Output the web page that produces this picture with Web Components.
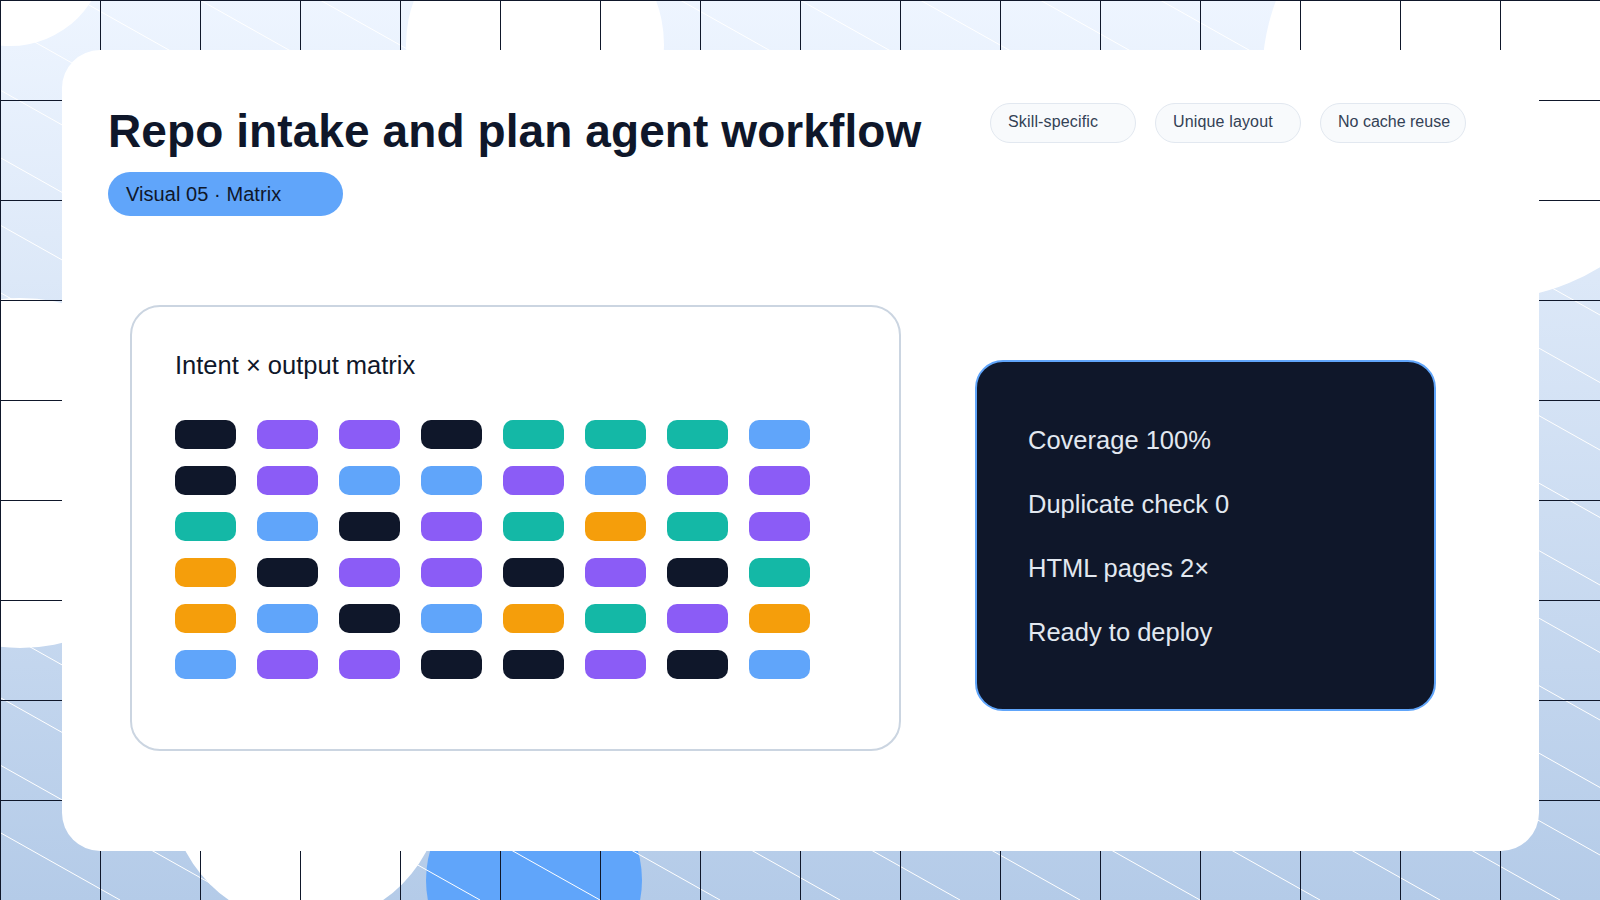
<!DOCTYPE html>
<html lang="en"><head><meta charset="utf-8"><title>Repo intake</title>
<style>html,body{margin:0;padding:0;background:#fff}body{font-family:"Liberation Sans",Arial,sans-serif;color:#0f172a}</style></head>
<body>
<x-stage>
  <x-card>
    <x-header slot="header">
      <span slot="title">Repo intake and plan agent workflow</span>
      <x-pill slot="badge">Visual 05 · Matrix</x-pill>
      <x-chip slot="chips" style="letter-spacing:.15px">Skill-specific</x-chip>
      <x-chip slot="chips" style="letter-spacing:.15px">Unique layout</x-chip>
      <x-chip slot="chips">No cache reuse</x-chip>
    </x-header>
    <x-matrix slot="left"></x-matrix>
    <x-stats slot="right">
      <div>Coverage 100%</div>
      <div>Duplicate check 0</div>
      <div>HTML pages 2×</div>
      <div>Ready to deploy</div>
    </x-stats>
  </x-card>
</x-stage>
<script>
function def(name, css, html, init){
  customElements.define(name, class extends HTMLElement{
    constructor(){super();const r=this.attachShadow({mode:'open'});r.innerHTML='<style>'+css+'</style>'+html;if(init)init.call(this,r);}
  });
}
let lines='';
for(let i=0;i<=27;i++){lines+=`<line x1="${120*i-1600}" y1="0" x2="${120*i}" y2="900"/>`;}
def('x-stage',`
  :host{display:block;position:relative;width:1600px;height:900px;box-sizing:border-box;padding:50px 61px 49px 62px;overflow:hidden;
    background:linear-gradient(180deg,#eef5ff,#b4cbe8)}
  .b{position:absolute;border-radius:50%;background:#fff}
  svg{position:absolute;left:0;top:0;display:block}
  .l{position:absolute;inset:0;background:
    linear-gradient(#0f172a 1px,transparent 1px) 0 0/100px 100px,
    linear-gradient(90deg,#0f172a 1px,transparent 1px) 0 0/100px 100px}
  ::slotted(*){position:relative}
`,`
  <div class="b" style="left:-86px;top:-146px;width:192px;height:192px"></div>
  <div class="b" style="left:406px;top:-84px;width:258px;height:258px"></div>
  <div class="b" style="left:1262px;top:-144px;width:444px;height:444px"></div>
  <div class="b" style="left:-155px;top:298px;width:350px;height:350px"></div>
  <div class="b" style="left:170px;top:652px;width:272px;height:272px"></div>
  <div class="b" style="left:426px;top:772px;width:216px;height:216px;background:#60a5fa"></div>
  <svg width="1600" height="900" viewBox="0 0 1600 900" stroke="#fff" stroke-width="1" fill="none">${lines}</svg>
  <div class="l"></div>
  <slot></slot>
`);
def('x-card',`
  :host{display:block;height:100%;background:#fff;border-radius:38px;box-sizing:border-box;padding:50px 73px 0 46px}
  .main{display:flex;align-items:flex-start;margin-top:89px;margin-left:22px}
  .r{margin-left:74px;margin-top:55px}
`,`<slot name="header"></slot><div class="main"><slot name="left"></slot><div class="r"><slot name="right"></slot></div></div>`);
def('x-header',`
  :host{display:flex;align-items:flex-start;justify-content:space-between}
  h1{margin:0;font:700 46px/62px "Liberation Sans",Arial,sans-serif;letter-spacing:.09px;color:#0f172a}
  .badge{margin-top:10px;display:flex}
  .chips{display:flex;gap:19px;margin-top:3px}
`,`<div><h1><slot name="title"></slot></h1><div class="badge"><slot name="badge"></slot></div></div><div class="chips"><slot name="chips"></slot></div>`);
def('x-pill',`
  :host{display:block;box-sizing:border-box;width:235px;height:44px;border-radius:22px;background:#60a5fa;padding:0 18px;
    font:20px/44px "Liberation Sans",Arial,sans-serif;letter-spacing:.06px;color:#0f172a}
`,`<slot></slot>`);
def('x-chip',`
  :host{display:block;box-sizing:border-box;width:146px;height:40px;border-radius:20px;background:#f8fafc;border:1px solid #e2e8f0;padding:0 17px;
    font:16px/36px "Liberation Sans",Arial,sans-serif;color:#334155;white-space:nowrap}
`,`<slot></slot>`);
const M=["npp nttt b","npb bpbp p","tbn ptot p","onp pnpn t","obn botp o","bpp nnpn b"].map(s=>s.replace(/ /g,''));
const C={n:'#0f172a',p:'#8b5cf6',b:'#60a5fa',t:'#14b8a6',o:'#f59e0b'};
def('x-matrix',`
  :host{display:block;box-sizing:border-box;width:771px;height:446px;border:2px solid #cbd5e1;border-radius:30px;background:#fff;padding:0 43px}
  h2{margin:0;padding-top:41px;font:400 25.5px/34px "Liberation Sans",Arial,sans-serif;color:#0f172a}
  .g{display:grid;grid-template-columns:repeat(8,61px);grid-auto-rows:29px;column-gap:21px;row-gap:17px;margin-top:38px}
  .g span{border-radius:10px}
`,`<h2></h2><div class="g"></div>`,function(r){
  r.querySelector('h2').textContent='Intent × output matrix';
  const g=r.querySelector('.g');
  M.join('').split('').forEach(c=>{const s=document.createElement('span');s.style.background=C[c];g.appendChild(s);});
});
def('x-stats',`
  :host{display:flex;flex-direction:column;justify-content:center;box-sizing:border-box;width:461px;height:351px;border:2px solid #60a5fa;border-radius:28px;background:#0f172a;padding:0 51px;
    font:25.5px/64px "Liberation Sans",Arial,sans-serif;color:#e2e8f0}
`,`<slot></slot>`);
</script>
</body></html>
